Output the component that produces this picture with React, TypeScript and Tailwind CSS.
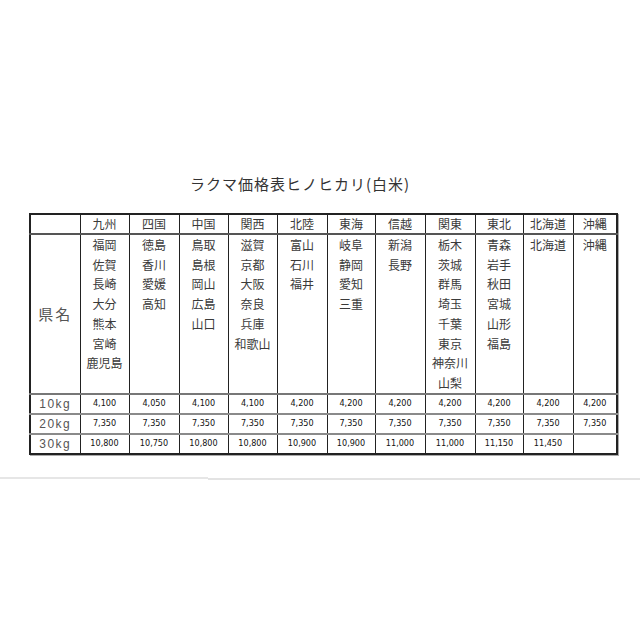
const regions = [
  { name: "九州", prefs: ["福岡", "佐賀", "長崎", "大分", "熊本", "宮崎", "鹿児島"], p10: "4,100", p20: "7,350", p30: "10,800" },
  { name: "四国", prefs: ["徳島", "香川", "愛媛", "高知"], p10: "4,050", p20: "7,350", p30: "10,750" },
  { name: "中国", prefs: ["鳥取", "島根", "岡山", "広島", "山口"], p10: "4,100", p20: "7,350", p30: "10,800" },
  { name: "関西", prefs: ["滋賀", "京都", "大阪", "奈良", "兵庫", "和歌山"], p10: "4,100", p20: "7,350", p30: "10,800" },
  { name: "北陸", prefs: ["富山", "石川", "福井"], p10: "4,200", p20: "7,350", p30: "10,900" },
  { name: "東海", prefs: ["岐阜", "静岡", "愛知", "三重"], p10: "4,200", p20: "7,350", p30: "10,900" },
  { name: "信越", prefs: ["新潟", "長野"], p10: "4,200", p20: "7,350", p30: "11,000" },
  { name: "関東", prefs: ["栃木", "茨城", "群馬", "埼玉", "千葉", "東京", "神奈川", "山梨"], p10: "4,200", p20: "7,350", p30: "11,000" },
  { name: "東北", prefs: ["青森", "岩手", "秋田", "宮城", "山形", "福島"], p10: "4,200", p20: "7,350", p30: "11,150" },
  { name: "北海道", prefs: ["北海道"], p10: "4,200", p20: "7,350", p30: "11,450" },
  { name: "沖縄", prefs: ["沖縄"], p10: "4,200", p20: "7,350", p30: "" },
]

// column widths, measured off the screenshot
const colClasses = [
  "w-[50px]",
  "w-[49px]",
  "w-[50px]",
  "w-[49px]",
  "w-[49px]",
  "w-[50px]",
  "w-[48px]",
  "w-[50px]",
  "w-[50px]",
  "w-[48px]",
  "w-[50px]",
  "w-[44px]",
]

const jp = "font-['Noto_Sans_CJK_JP','Noto_Sans',sans-serif]"
const num = "font-['Liberation_Sans_Narrow','DejaVu_Sans_Condensed','Liberation_Sans',sans-serif]"

function PriceRow({ label, field, last }: { label: string; field: "p10" | "p20" | "p30"; last?: boolean }) {
  return (
    <tr className={last ? "h-[20px]" : "h-[19px] border-b-2 border-[#8a8a8a]"}>
      <td className="border-r border-[#222] text-center font-['Liberation_Sans',sans-serif] text-[12px] tracking-[1.5px] text-[#555]">
        {label}
      </td>
      {regions.map((r, i) => (
        <td
          key={r.name}
          className={`text-center text-[9px] text-[#111] ${num} ${i < regions.length - 1 ? "border-r border-[#222]" : ""}`}
        >
          {r[field]}
        </td>
      ))}
    </tr>
  )
}

export default function App() {
  return (
    <div className="relative h-[640px] w-[640px] bg-white">
      <div className={`pl-[190px] pt-[174px] text-[15px] leading-[20px] tracking-[1px] text-[#333] ${jp}`}>
        ラクマ価格表ヒノヒカリ(白米)
      </div>
      <div className="pl-[29px] pt-[19px]">
        <table className="w-[587px] table-fixed border-collapse border-2 border-[#222] shadow-[1px_1px_0_#aaa]">
          <colgroup>
            {colClasses.map((c, i) => (
              <col key={i} className={c} />
            ))}
          </colgroup>
          <tbody>
            <tr className="h-[20px] border-b-2 border-[#555]">
              <td className="border-r border-[#222]" />
              {regions.map((r, i) => (
                <td
                  key={r.name}
                  className={`text-center text-[12px] leading-[18px] text-[#3a3a3a] ${jp} ${i < regions.length - 1 ? "border-r border-[#222]" : ""}`}
                >
                  {r.name}
                </td>
              ))}
            </tr>
            <tr className="h-[160px] border-b-2 border-[#777]">
              <td className={`border-r border-[#222] text-center align-middle text-[15px] tracking-[2px] text-[#555] ${jp}`}>
                県名
              </td>
              {regions.map((r, i) => (
                <td
                  key={r.name}
                  className={`align-top text-center text-[12px] leading-[19.7px] text-[#3a3a3a] ${jp} ${i < regions.length - 1 ? "border-r border-[#222]" : ""}`}
                >
                  {r.prefs.map((p) => (
                    <div key={p}>{p}</div>
                  ))}
                </td>
              ))}
            </tr>
            <PriceRow label="10kg" field="p10" />
            <PriceRow label="20kg" field="p20" />
            <PriceRow label="30kg" field="p30" last />
          </tbody>
        </table>
      </div>
      <div className="absolute left-0 top-[477px] h-[2px] w-[208px] bg-[#e6e6e6]" />
      <div className="absolute left-[208px] top-[478px] h-[2px] w-[432px] bg-[#e3e3e3]" />
    </div>
  )
}
